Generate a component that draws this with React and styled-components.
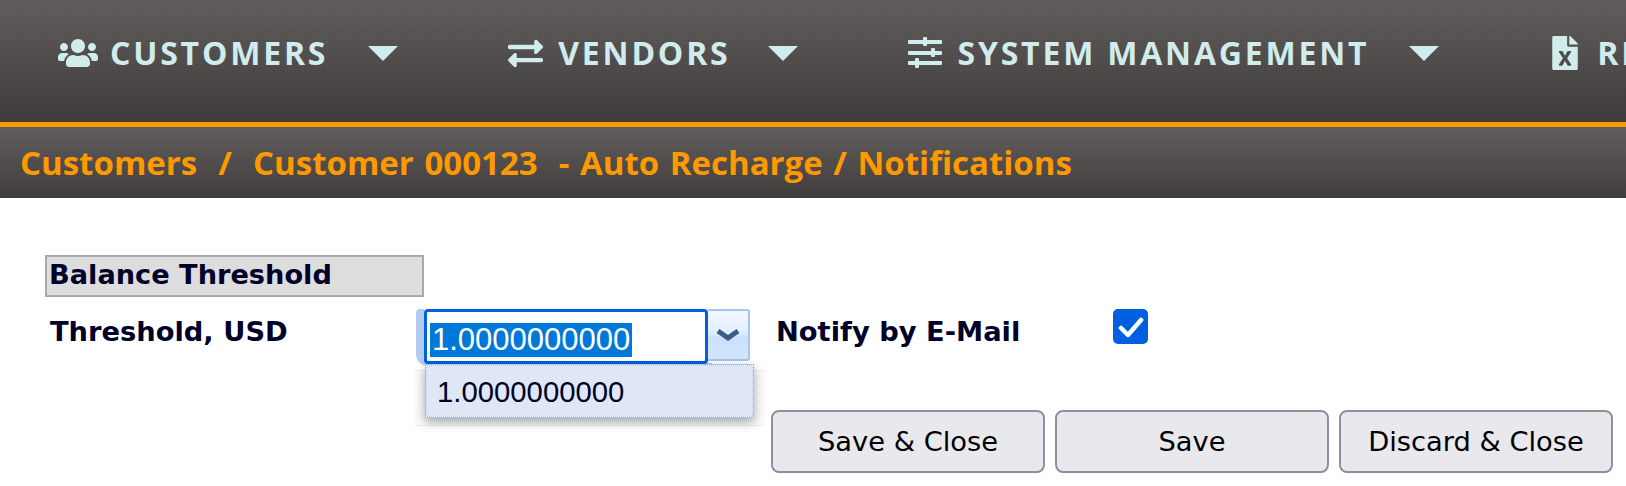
import React from 'react';
import styled, { createGlobalStyle } from 'styled-components';
import { FaUsers, FaExchangeAlt, FaFileExcel } from 'react-icons/fa';

const GlobalStyle = createGlobalStyle`
  html, body {
    margin: 0;
    padding: 0;
    background: #fff;
    overflow: hidden;
  }
`;

const Page = styled.div`
  width: 1626px;
  height: 486px;
  overflow: hidden;
  position: relative;
`;

const NavBar = styled.nav`
  height: 122px;
  display: flex;
  align-items: flex-start;
  padding: 36px 0 0 58px;
  box-sizing: border-box;
  white-space: nowrap;
  background:
    repeating-linear-gradient(0deg, rgba(0,0,0,.03) 0 1px, transparent 1px 3px),
    repeating-linear-gradient(90deg, rgba(255,255,255,.015) 0 1px, transparent 1px 3px),
    linear-gradient(#625d5d, #3f3b3b);
`;

const NavItem = styled.div`
  display: flex;
  align-items: center;
  height: 34px;
  flex-shrink: 0;
  color: #d0ecec;
  margin-right: ${props => props.$gap}px;
`;

const NavIcon = styled.span`
  display: flex;
  align-items: center;
  width: ${props => props.$width}px;
  margin-right: ${props => props.$gap}px;
  svg { display: block; }
`;

const NavLabel = styled.span`
  font-family: "Open Sans", sans-serif;
  font-weight: 700;
  font-size: 32px;
  letter-spacing: 2.8px;
  line-height: 34px;
`;

const Caret = styled.span`
  width: 0;
  height: 0;
  margin-left: ${props => props.$gap}px;
  border-left: 15px solid transparent;
  border-right: 15px solid transparent;
  border-top: 15px solid #d0ecec;
`;

const Crumbs = styled.div`
  height: 76px;
  box-sizing: border-box;
  border-top: 5px solid #ff9900;
  display: flex;
  align-items: center;
  padding-left: 20px;
  background: linear-gradient(#625d5d, #413d3d);
  font-family: "Open Sans", sans-serif;
  font-weight: 700;
  font-size: 33px;
  word-spacing: 2px;
  color: #ff9900;
  white-space: pre;
`;

const Form = styled.div`
  padding: 57px 13px 0 45px;
`;

const SectionTitle = styled.div`
  width: 379px;
  height: 42px;
  box-sizing: border-box;
  border: 2px solid #aaa;
  background: #ddd;
  padding-left: 2px;
  font-family: "DejaVu Sans", sans-serif;
  font-weight: 700;
  font-size: 27.2px;
  line-height: 36px;
  color: #000029;
`;

const FieldRow = styled.div`
  display: flex;
  align-items: flex-start;
  margin-top: 12px;
  height: 101px;
`;

const FieldLabel = styled.label`
  width: ${props => props.$width}px;
  padding-left: ${props => props.$indent}px;
  box-sizing: border-box;
  flex-shrink: 0;
  font-family: "DejaVu Sans", sans-serif;
  font-weight: 700;
  font-size: 27.3px;
  line-height: 46px;
  color: #000029;
`;

const Combo = styled.div`
  position: relative;
  display: flex;
  width: 326px;
  height: 55px;
  margin-right: 26px;
  flex-shrink: 0;
  &:before {
    content: '';
    position: absolute;
    left: -8px;
    top: 0;
    width: 296px;
    height: 57px;
    border-left: 8px solid #b3cbee;
    border-bottom: 3px solid #b3cbee;
    border-radius: 4px 0 0 12px;
    box-sizing: border-box;
  }
`;

const ComboInput = styled.div`
  position: relative;
  width: 284px;
  height: 55px;
  box-sizing: border-box;
  border: 3px solid #0060df;
  border-radius: 4px;
  background: #fff;
  padding: 11px 0 0 3px;
`;

const Selected = styled.span`
  display: inline-block;
  background: #0078d7;
  color: #fff;
  font-family: "Liberation Sans", sans-serif;
  font-size: 31px;
  line-height: 34px;
  padding: 0 2px;
`;

const ComboArrow = styled.div`
  position: relative;
  width: 42px;
  height: 52px;
  box-sizing: border-box;
  border: 2px solid #a6c5f0;
  border-left: 0;
  border-radius: 0 3px 3px 0;
  background: linear-gradient(#f2f8ff 0%, #e2efff 45%, #c9e1fb 55%, #d2e6fd 100%);
  display: flex;
  align-items: center;
  justify-content: center;
`;

const ListBackdrop = styled.div`
  position: absolute;
  left: -9px;
  top: 61px;
  width: 350px;
  height: 54px;
  border-top: 1px solid #eee;
  border-bottom: 1px solid #eee;
  background: #fbfbfb;
`;

const DropList = styled.div`
  position: absolute;
  left: 1px;
  top: 55px;
  width: 329px;
  height: 54px;
  box-sizing: border-box;
  border: 2px solid #a6c5f0;
  background: #dfe7f6;
  outline: 1px dotted #fff;
  outline-offset: -2px;
  box-shadow: 0 4px 10px rgba(0, 0, 0, .35);
  padding: 8px 0 0 10px;
  font-family: "Liberation Sans", sans-serif;
  font-size: 29.3px;
  line-height: 36px;
  color: #000029;
`;

const CheckBox = styled.span`
  width: 35px;
  height: 35px;
  border-radius: 5px;
  background: #0060df;
  display: flex;
  align-items: center;
  justify-content: center;
`;

const ButtonRow = styled.div`
  display: flex;
  justify-content: flex-end;
  gap: 10px;
`;

const Button = styled.button`
  width: 274px;
  height: 63px;
  box-sizing: border-box;
  border: 2px solid #8f8f9d;
  border-radius: 8px;
  background: #e9e9ed;
  font-family: "DejaVu Sans", sans-serif;
  font-size: 27.3px;
  color: #000;
  padding: 0;
`;

const SlidersIcon = () => (
  <svg width="34" height="32" viewBox="0 0 34 32" fill="#d0ecec">
    <rect x="0" y="3" width="34" height="4" rx="1" />
    <rect x="15" y="0" width="4" height="9" rx="1" />
    <rect x="0" y="14" width="34" height="4" rx="1" />
    <rect x="23" y="11" width="4" height="9" rx="1" />
    <rect x="0" y="24" width="34" height="4" rx="1" />
    <rect x="7" y="21" width="4" height="10" rx="1" />
  </svg>
);

const App = () => (
  <Page>
    <GlobalStyle />
    <NavBar>
      <NavItem $gap={110}>
        <NavIcon $width={40} $gap={12}><FaUsers size={40} /></NavIcon>
        <NavLabel>CUSTOMERS</NavLabel>
        <Caret $gap={40} />
      </NavItem>
      <NavItem $gap={110}>
        <NavIcon $width={35} $gap={15}><FaExchangeAlt size={35} /></NavIcon>
        <NavLabel>VENDORS</NavLabel>
        <Caret $gap={37} />
      </NavItem>
      <NavItem $gap={113}>
        <NavIcon $width={34} $gap={16}><SlidersIcon /></NavIcon>
        <NavLabel>SYSTEM MANAGEMENT</NavLabel>
        <Caret $gap={40} />
      </NavItem>
      <NavItem $gap={0}>
        <NavIcon $width={26} $gap={19}><FaFileExcel size={34} /></NavIcon>
        <NavLabel>REPORTS</NavLabel>
      </NavItem>
    </NavBar>
    <Crumbs>{'Customers  /  Customer 000123  - Auto Recharge / Notifications'}</Crumbs>
    <Form>
      <SectionTitle>Balance Threshold</SectionTitle>
      <FieldRow>
        <FieldLabel $width={379} $indent={5}>Threshold, USD</FieldLabel>
        <Combo>
          <ListBackdrop />
          <ComboInput><Selected>1.0000000000</Selected></ComboInput>
          <ComboArrow>
            <svg width="24" height="14" viewBox="0 0 24 14">
              <path d="M2 3 L12 10 L22 3" fill="none" stroke="#3b5a85" strokeWidth="5" />
            </svg>
          </ComboArrow>
          <DropList>1.0000000000</DropList>
        </Combo>
        <FieldLabel $width={337} $indent={0}>Notify by E-Mail</FieldLabel>
        <CheckBox>
          <svg width="26" height="22" viewBox="0 0 26 22">
            <path d="M3 12 L10 19 L23 4" fill="none" stroke="#fff" strokeWidth="4.5" strokeLinecap="round" strokeLinejoin="round" />
          </svg>
        </CheckBox>
      </FieldRow>
      <ButtonRow>
        <Button>Save &amp; Close</Button>
        <Button>Save</Button>
        <Button>Discard &amp; Close</Button>
      </ButtonRow>
    </Form>
  </Page>
);

export default App;
